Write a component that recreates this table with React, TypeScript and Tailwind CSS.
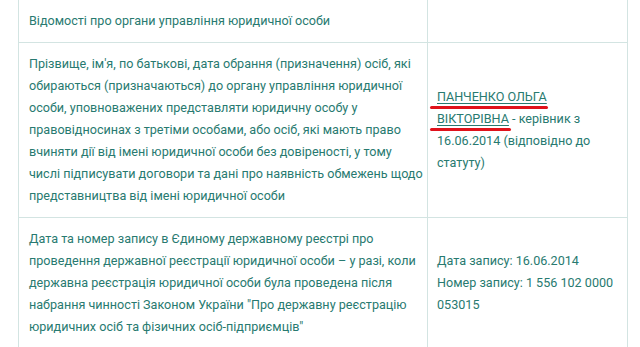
import React from 'react';

const font = { fontFamily: 'Roboto, "Noto Sans", sans-serif' };

const rows = [
  {
    label: ['Відомості про органи управління юридичної особи'],
    value: null,
  },
  {
    label: [
      "Прізвище, ім'я, по батькові, дата обрання (призначення) осіб, які",
      'обираються (призначаються) до органу управління юридичної',
      'особи, уповноважених представляти юридичну особу у',
      'правовідносинах з третіми особами, або осіб, які мають право',
      'вчиняти дії від імені юридичної особи без довіреності, у тому',
      'числі підписувати договори та дані про наявність обмежень щодо',
      'представництва від імені юридичної особи',
    ],
    value: 'head',
  },
  {
    label: [
      'Дата та номер запису в Єдиному державному реєстрі про',
      'проведення державної реєстрації юридичної особи – у разі, коли',
      'державна реєстрація юридичної особи була проведена після',
      'набрання чинності Законом України "Про державну реєстрацію',
      'юридичних осіб та фізичних осіб-підприємців"',
    ],
    value: 'record',
  },
];

const Marked = ({ children, width }: { children: React.ReactNode; width: string }) => (
  <span className="relative underline decoration-[#287a70] underline-offset-2">
    {children}
    <span className={`absolute -left-[7px] top-[17px] h-[3px] rounded-full bg-[#e0121b] ${width}`} />
  </span>
);

const Value = ({ kind }: { kind: string | null }) => {
  if (kind === 'head') {
    return (
      <div className="whitespace-nowrap">
        <div>
          <Marked width="w-[118px]">ПАНЧЕНКО ОЛЬГА</Marked>
        </div>
        <div>
          <Marked width="w-[81px]">ВІКТОРІВНА</Marked> - керівник з
        </div>
        <div>16.06.2014 (відповідно до</div>
        <div>статуту)</div>
      </div>
    );
  }
  if (kind === 'record') {
    return (
      <div className="whitespace-nowrap">
        <div>Дата запису: 16.06.2014</div>
        <div>Номер запису: 1 556 102 0000</div>
        <div>053015</div>
      </div>
    );
  }
  return null;
};

export default function App() {
  return (
    <div className="h-[347px] w-[640px] overflow-hidden bg-white pl-[18px]" style={font}>
      <table className="w-[609px] -mt-px table-fixed border-collapse text-[12.6px] leading-[22px] text-[#287a70]">
        <colgroup>
          <col className="w-[409px]" />
          <col className="w-[200px]" />
        </colgroup>
        <tbody>
          {rows.map((row, i) => (
            <tr key={i}>
              <td className="border border-[#d3e4e2] px-[10px] py-[10px] align-middle">
                {row.label.map((line, j) => (
                  <div key={j} className="whitespace-nowrap">{line}</div>
                ))}
              </td>
              <td className="border border-[#d3e4e2] pl-[9px] pr-[4px] py-[10px] align-middle">
                <Value kind={row.value} />
              </td>
            </tr>
          ))}
        </tbody>
      </table>
    </div>
  );
}
